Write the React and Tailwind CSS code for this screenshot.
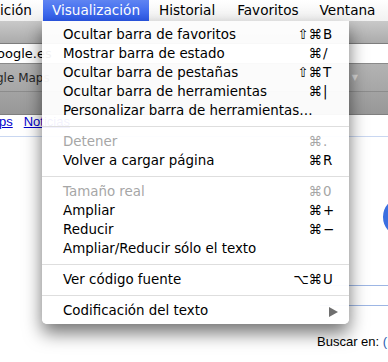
import React from 'react';

const font = { fontFamily: '"DejaVu Sans", "Noto Sans", sans-serif' };

const sections = [
  [
    { label: 'Ocultar barra de favoritos', mods: '⇧⌘', key: 'B' },
    { label: 'Mostrar barra de estado', mods: '⌘', key: '/' },
    { label: 'Ocultar barra de pestañas', mods: '⇧⌘', key: 'T' },
    { label: 'Ocultar barra de herramientas', mods: '⌘', key: '|' },
    { label: 'Personalizar barra de herramientas…' },
  ],
  [
    { label: 'Detener', mods: '⌘', key: '.', disabled: true },
    { label: 'Volver a cargar página', mods: '⌘', key: 'R' },
  ],
  [
    { label: 'Tamaño real', mods: '⌘', key: '0', disabled: true },
    { label: 'Ampliar', mods: '⌘', key: '+' },
    { label: 'Reducir', mods: '⌘', key: '−' },
    { label: 'Ampliar/Reducir sólo el texto' },
  ],
  [{ label: 'Ver código fuente', mods: '⌥⌘', key: 'U' }],
  [{ label: 'Codificación del texto', submenu: true }],
];

const MenuItem = ({ item }) => (
  <div
    className={`flex h-[19px] items-center pl-[21px] pr-[15px] text-[13.4px] ${
      item.disabled ? 'text-[#a6a6a6]' : 'text-black'
    }`}
  >
    <span className="flex-1 whitespace-nowrap">{item.label}</span>
    {item.mods && (
      <span className="flex items-center">
        <span className="text-right">{item.mods}</span>
        <span className="w-[12px] pl-[1px]">{item.key}</span>
      </span>
    )}
    {item.submenu && (
      <svg width="9" height="10" viewBox="0 0 9 10" className="mr-[-4px]">
        <path d="M0 0 L9 5 L0 10 Z" fill="#6f6f6f" />
      </svg>
    )}
  </div>
);

const Separator = () => (
  <div className="flex h-[12px] items-start pt-[5px]">
    <div className="h-px w-full bg-[#dedede]" />
  </div>
);

export default function App() {
  return (
    <div className="relative h-[362px] w-[388px] overflow-hidden bg-white" style={font}>
      {/* system menu bar */}
      <div className="flex h-[21px] items-center bg-gradient-to-b from-white to-[#f1f1f1] text-[13.6px] text-black">
        <span className="w-[43px] whitespace-nowrap">ición</span>
        <span className="flex h-full items-center bg-gradient-to-b from-[#5f84f2] to-[#2b58ea] pl-[9px] pr-[9px] text-white">
          Visualización
        </span>
        <span className="ml-[10px] whitespace-nowrap">Historial</span>
        <span className="ml-[22px] whitespace-nowrap">Favoritos</span>
        <span className="ml-[21px] whitespace-nowrap">Ventana</span>
      </div>

      {/* browser chrome behind the menu */}
      <div className="h-[23px] border-b border-[#7d7d7d] bg-gradient-to-b from-[#c9c9c9] to-[#ababab]" />
      <div className="flex h-[20px] items-center border-b border-[#8a8a8a] bg-white text-[13px] text-black">
        <span className="ml-[-3px] whitespace-nowrap">oogle.es</span>
      </div>
      <div className="flex h-[28px] items-center justify-between border-b border-[#8c8c8c] bg-gradient-to-b from-[#b3b3b3] to-[#a6a6a6] text-[12px] text-[#262626]">
        <span className="ml-[-4px] whitespace-nowrap">gle Maps</span>
        <span className="mr-[30px] text-[8px] text-[#d8d8d8]">▼</span>
      </div>
      <div className="h-[23px] border-b border-[#7f7f7f] bg-gradient-to-b from-[#a3a3a3] to-[#989898]" />

      {/* page */}
      <div className="flex h-[22px] items-end gap-[11px] border-b border-[#c9d7f1] pb-[5px] text-[13px]" style={{ fontFamily: '"Liberation Sans", Arial, sans-serif' }}>
        <span className="ml-[-1px] text-[#0000cc] underline">ps</span>
        <span className="text-[#0000cc] underline">Noticias</span>
      </div>
      <div className="flex h-[148px] justify-end pt-[60px]">
        <div className="mr-[-35px] h-[40px] w-[40px] rounded-full border-[7px] border-[#3b6fe0]" />
      </div>
      <div className="ml-[320px] h-[21px] border-y border-[#9db6e4]" />
      <div
        className="ml-[317px] mt-[26px] whitespace-nowrap text-[13px] text-black"
        style={{ fontFamily: '"Liberation Sans", Arial, sans-serif' }}
      >
        Buscar en: <span className="text-[#2a5db0]">(</span>
      </div>

      {/* dropdown menu */}
      <div className="absolute left-[42px] top-[21px] w-[307px] rounded-b-[5px] bg-white/95 pb-[3px] pt-[5px] shadow-[0_9px_18px_rgba(0,0,0,0.55)]">
        {sections.map((items, i) => (
          <div key={i}>
            {i > 0 && <Separator />}
            {items.map((item) => (
              <MenuItem key={item.label} item={item} />
            ))}
          </div>
        ))}
      </div>
    </div>
  );
}
